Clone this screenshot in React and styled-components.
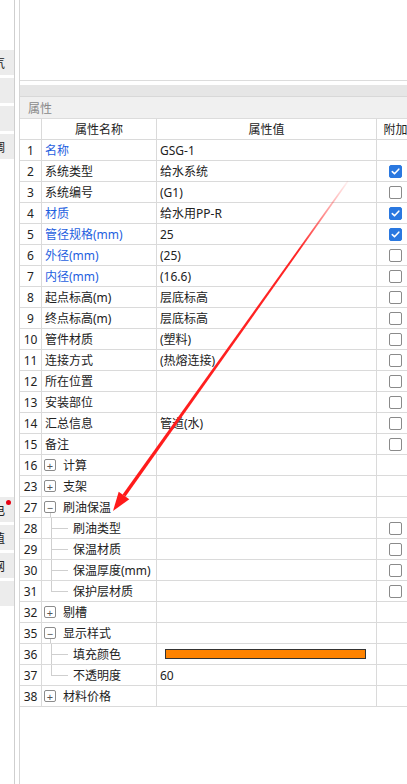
import React from "react";
import styled, { createGlobalStyle } from "styled-components";

const GlobalStyle = createGlobalStyle`
  html, body {
    margin: 0;
    padding: 0;
    background: #fff;
  }
  body {
    font-family: "Noto Sans", "Noto Sans CJK SC", sans-serif;
    font-size: 12px;
    color: #222;
  }
`;

const Page = styled.div`
  position: relative;
  display: flex;
  width: 407px;
  height: 784px;
  overflow: hidden;
`;

const Sidebar = styled.div`
  width: 15px;
  flex: none;
  border-right: 1px solid #cfcfcf;
  margin-right: 4px;
  padding-top: 50px;
  box-sizing: border-box;
`;

const TabGroup = styled.div`
  display: flex;
  flex-direction: column;
  gap: 3px;
  margin-top: ${(p) => p.$top || 0}px;
`;

const Tab = styled.div`
  position: relative;
  height: 25px;
  background: #ececec;
  overflow: hidden;
  display: flex;
  align-items: center;
  font-family: "Noto Sans CJK SC", sans-serif;
  font-size: 12px;
  color: #222;

  span {
    margin-left: -7px;
  }
`;

const Dot = styled.i`
  position: absolute;
  left: 6px;
  top: 3px;
  width: 5px;
  height: 5px;
  border-radius: 50%;
  background: #e60012;
`;

const Main = styled.div`
  flex: 1;
  min-width: 0;
  display: flex;
  flex-direction: column;
  border-left: 1px solid #d6d6d6;
  overflow: hidden;
`;

const TopPanel = styled.div`
  height: 80px;
  flex: none;
  border-bottom: 1px solid #dcdcdc;
  margin-bottom: 4px;
`;

const GrayBar = styled.div`
  height: 11px;
  flex: none;
  background: #e6e6e6;
  border-bottom: 1px solid #d8d8d8;
`;

const TitleBar = styled.div`
  height: 21px;
  flex: none;
  background: #f0f0f0;
  border-bottom: 1px solid #dcdcdc;
  display: flex;
  align-items: center;
  padding-left: 8px;
  color: #8a8a8a;
`;

const Table = styled.div`
  display: flex;
  flex-direction: column;
  width: 395px;
`;

const Row = styled.div`
  display: grid;
  grid-template-columns: 22px 115px 220px 38px;
  height: 21px;
  box-sizing: border-box;
  border-bottom: 1px solid #dadada;
`;

const Cell = styled.div`
  display: flex;
  align-items: center;
  justify-content: ${(p) => (p.$center ? "center" : "flex-start")};
  padding-left: ${(p) => p.$pad || 0}px;
  border-right: 1px solid #dadada;
  white-space: nowrap;
  overflow: hidden;
  color: ${(p) => (p.$blue ? "#1f5fe0" : "#222")};
  min-width: 0;
`;

const HeadCell = styled(Cell)`
  justify-content: center;
  color: #222;
`;

const Toggle = styled.span`
  position: relative;
  flex: none;
  width: 10px;
  height: 10px;
  border: 1px solid #8c8c8c;
  border-radius: 2px;
  margin: 0 7px 0 2px;
  display: flex;
  align-items: center;
  justify-content: center;
  font-size: 11px;
  line-height: 1;
  color: #555;
  overflow: visible;

  &::after {
    content: "";
    display: ${(p) => (p.$open ? "block" : "none")};
    position: absolute;
    left: 5px;
    top: 11px;
    height: 5px;
    border-left: 1px solid #cfcfcf;
  }
`;

const Branch = styled.span`
  position: relative;
  flex: none;
  align-self: stretch;
  width: 22px;
  margin-left: 9px;

  &::before {
    content: "";
    position: absolute;
    left: 0;
    top: 0;
    bottom: ${(p) => (p.$last ? "50%" : "-1px")};
    border-left: 1px solid #cfcfcf;
  }

  &::after {
    content: "";
    position: absolute;
    left: 0;
    top: 50%;
    width: 17px;
    border-top: 1px solid #cfcfcf;
  }
`;

const Check = styled.span`
  width: 13px;
  height: 13px;
  box-sizing: border-box;
  border-radius: 2px;
  border: 1px solid ${(p) => (p.$on ? "#2a78e0" : "#8a8a8a")};
  background: ${(p) => (p.$on ? "#2a78e0" : "#fff")};
  display: flex;
  align-items: center;
  justify-content: center;
`;

const Swatch = styled.span`
  width: 201px;
  height: 10px;
  box-sizing: border-box;
  margin-left: 8px;
  border: 1px solid #333;
  background: ${(p) => p.$color};
`;

const Overlay = styled.svg`
  position: absolute;
  left: 0;
  top: 0;
  pointer-events: none;
`;

const rows = [
  { n: 1, name: "名称", blue: true, value: "GSG-1" },
  { n: 2, name: "系统类型", value: "给水系统", check: true },
  { n: 3, name: "系统编号", value: "(G1)", check: false },
  { n: 4, name: "材质", blue: true, value: "给水用PP-R", check: true },
  { n: 5, name: "管径规格(mm)", blue: true, value: "25", check: true },
  { n: 6, name: "外径(mm)", blue: true, value: "(25)", check: false },
  { n: 7, name: "内径(mm)", blue: true, value: "(16.6)", check: false },
  { n: 8, name: "起点标高(m)", value: "层底标高", check: false },
  { n: 9, name: "终点标高(m)", value: "层底标高", check: false },
  { n: 10, name: "管件材质", value: "(塑料)", check: false },
  { n: 11, name: "连接方式", value: "(热熔连接)", check: false },
  { n: 12, name: "所在位置", value: "", check: false },
  { n: 13, name: "安装部位", value: "", check: false },
  { n: 14, name: "汇总信息", value: "管道(水)", check: false },
  { n: 15, name: "备注", value: "", check: false },
  { n: 16, name: "计算", group: "+" },
  { n: 23, name: "支架", group: "+" },
  { n: 27, name: "刷油保温", group: "−" },
  { n: 28, name: "刷油类型", child: true, check: false },
  { n: 29, name: "保温材质", child: true, check: false },
  { n: 30, name: "保温厚度(mm)", child: true, check: false },
  { n: 31, name: "保护层材质", child: true, last: true, check: false },
  { n: 32, name: "剔槽", group: "+" },
  { n: 35, name: "显示样式", group: "−" },
  { n: 36, name: "填充颜色", child: true, color: "#ff8300" },
  { n: 37, name: "不透明度", child: true, last: true, value: "60" },
  { n: 38, name: "材料价格", group: "+" },
];

const CheckMark = () => (
  <svg width="9" height="9" viewBox="0 0 9 9">
    <polyline
      points="1.3,4.6 3.5,6.8 7.8,2.2"
      fill="none"
      stroke="#fff"
      strokeWidth="1.6"
      strokeLinecap="round"
      strokeLinejoin="round"
    />
  </svg>
);

const NameCell = ({ row }) => {
  if (row.group) {
    return (
      <Cell $pad={0}>
        <Toggle $open={row.group === "−"}>{row.group}</Toggle>
        {row.name}
      </Cell>
    );
  }
  if (row.child) {
    return (
      <Cell>
        <Branch $last={row.last} />
        {row.name}
      </Cell>
    );
  }
  return (
    <Cell $pad={3} $blue={row.blue}>
      {row.name}
    </Cell>
  );
};

const Arrow = () => {
  // red annotation line from (348,181) down to the head at (113,511)
  const sx = 348, sy = 181, tx = 113, ty = 511;
  const len = Math.hypot(tx - sx, ty - sy);
  const dx = (tx - sx) / len, dy = (ty - sy) / len;
  const px = -dy, py = dx;
  const hl = 19, hw = 6.5;
  const bx = tx - dx * hl, by = ty - dy * hl;
  const w0 = 0.7, w1 = 1.8;
  const shaft = [
    [sx + px * w0, sy + py * w0],
    [bx + px * w1, by + py * w1],
    [bx - px * w1, by - py * w1],
    [sx - px * w0, sy - py * w0],
  ];
  const head = [
    [tx, ty],
    [bx + px * hw, by + py * hw],
    [bx - px * hw, by - py * hw],
  ];
  const pts = (a) => a.map((p) => p.map((v) => v.toFixed(1)).join(",")).join(" ");
  return (
    <Overlay width="407" height="784" viewBox="0 0 407 784">
      <defs>
        <linearGradient id="fade" gradientUnits="userSpaceOnUse" x1={sx} y1={sy} x2={bx} y2={by}>
          <stop offset="0" stopColor="#ff1a1a" stopOpacity="0.05" />
          <stop offset="0.22" stopColor="#ff1a1a" stopOpacity="0.95" />
          <stop offset="1" stopColor="#ff1a1a" stopOpacity="1" />
        </linearGradient>
      </defs>
      <polygon points={pts(shaft)} fill="url(#fade)" />
      <polygon points={pts(head)} fill="#ff1a1a" />
    </Overlay>
  );
};

const App = () => {
  return (
    <Page>
      <GlobalStyle />
      <Sidebar>
        <TabGroup>
          <Tab><span>气</span></Tab>
          <Tab />
          <Tab />
          <Tab><span>调</span></Tab>
        </TabGroup>
        <TabGroup $top={338}>
          <Tab><span>电</span><Dot /></Tab>
          <Tab><span>值</span></Tab>
          <Tab><span>网</span></Tab>
          <Tab />
        </TabGroup>
      </Sidebar>
      <Main>
        <TopPanel />
        <GrayBar />
        <TitleBar>属性</TitleBar>
        <Table>
          <Row>
            <HeadCell />
            <HeadCell>属性名称</HeadCell>
            <HeadCell>属性值</HeadCell>
            <HeadCell>附加</HeadCell>
          </Row>
          {rows.map((row) => (
            <Row key={row.n}>
              <Cell $center>{row.n}</Cell>
              <NameCell row={row} />
              <Cell $pad={row.color ? 0 : 3}>
                {row.color ? <Swatch $color={row.color} /> : row.value}
              </Cell>
              <Cell $center>
                {row.check !== undefined && (
                  <Check $on={row.check}>{row.check && <CheckMark />}</Check>
                )}
              </Cell>
            </Row>
          ))}
        </Table>
      </Main>
      <Arrow />
    </Page>
  );
};

export default App;
